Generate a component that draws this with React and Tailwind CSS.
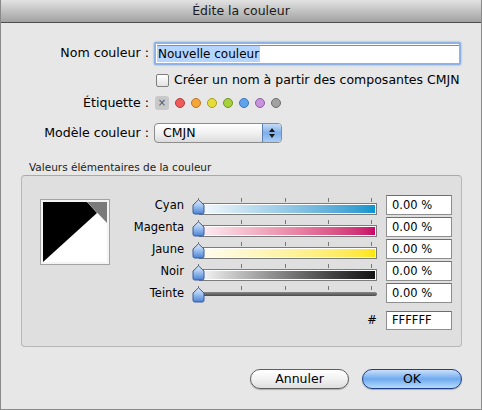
import React from "react";

const FONT = { fontFamily: '"Lucida Grande", "DejaVu Sans", sans-serif' };

function Knob() {
  return (
    <svg width="13" height="16" viewBox="0 0 13 16" className="block">
      <defs>
        <linearGradient id="kg" x1="0" y1="0" x2="0" y2="1">
          <stop offset="0" stopColor="#e3eefc" />
          <stop offset="0.45" stopColor="#9fc2ef" />
          <stop offset="1" stopColor="#4a82d4" />
        </linearGradient>
      </defs>
      <path
        d="M6.5 0.8 L12 6 L12 13.3 Q12 15 10.3 15 L2.7 15 Q1 15 1 13.3 L1 6 Z"
        fill="url(#kg)"
        stroke="#3b5b99"
        strokeWidth="1"
      />
    </svg>
  );
}

function Ticks() {
  return (
    <div className="absolute left-0 top-[3px] w-full h-[5px]">
      {[7, 50, 94, 137, 180].map((x) => (
        <div key={x} className="absolute top-0 w-px h-[4px] bg-[#777]" style={{ left: x }} />
      ))}
    </div>
  );
}

function Slider({ label, grad, line }) {
  return (
    <div className="flex h-[22px] items-start">
      <div className="w-[70px] text-right text-[11.5px] leading-[20px] text-black pr-[1px]">{label}</div>
      <div className="relative w-[190px] h-[22px] ml-[6px]">
        <Ticks />
        {line ? (
          <div className="absolute left-[8px] top-[9px] w-[178px] h-[4px] rounded-full bg-gradient-to-b from-[#8a8a8a] to-[#4a4a4a]" />
        ) : (
          <div className="absolute left-[8px] top-[8px] w-[178px] h-[12px] border border-[#7b7b7b] bg-white p-px">
            <div className={`w-full h-full ${grad}`} />
          </div>
        )}
        <div className="absolute left-[1px] top-[4px]">
          <Knob />
        </div>
      </div>
      <div className="ml-[5px] w-[66px] h-[20px] bg-white border border-[#8e8e8e] border-t-[#6e6e6e] text-[11.5px] leading-[18px] pl-[5px] text-black">
        0.00 %
      </div>
    </div>
  );
}

function Swatch() {
  return (
    <div className="w-[70px] h-[66px] border border-[#a3a3a3] bg-[#f4f4f4] p-[2px]">
      <svg width="64" height="60" viewBox="0 0 64 60" className="block">
        <rect width="64" height="60" fill="#fff" />
        <polygon points="0,0 44,0 54,11 0,60" fill="#000" />
        <polygon points="44,0 64,0 64,21" fill="#7a7a7a" />
      </svg>
    </div>
  );
}

const dots = [
  ["#ef5b5b", "#b53a3a"],
  ["#f5a53a", "#b9771f"],
  ["#e6dd3c", "#a99f1c"],
  ["#a5d13b", "#72961f"],
  ["#5ea3ee", "#3a74b9"],
  ["#c693dc", "#8f5ea6"],
  ["#a2a2a2", "#6b6b6b"],
];

export default function App() {
  return (
    <div
      className="w-[482px] h-[410px] bg-[#e7e7e7] border-x border-b border-[#8a8a8a] flex flex-col text-black overflow-hidden"
      style={FONT}
    >
      {/* title bar */}
      <div className="h-[23px] shrink-0 bg-gradient-to-b from-[#e2e2e2] via-[#c2c2c2] to-[#a2a2a2] border-b border-[#4d4d4d] flex items-center justify-center text-[12.5px] text-[#1a1a1a] pt-px">
        Édite la couleur
      </div>

      {/* name row */}
      <div className="mt-[19px] flex items-center h-[23px]">
        <div className="w-[148px] text-right text-[12.6px]">Nom couleur :</div>
        <div className="ml-[5px] w-[307px] h-[23px] rounded-[2px] border-2 border-[#8fb2e4] shadow-[0_0_2px_#6c96d6] flex items-center bg-white">
          <div className="ml-[1px] h-[17px] border-t border-[#8a8a8a] flex-1 flex items-center">
            <span className="bg-[#b5d5ff] text-[12px] leading-[16px] px-[1px]">Nouvelle couleur</span>
          </div>
        </div>
      </div>

      {/* checkbox row */}
      <div className="mt-[6px] h-[18px] flex items-center pl-[155px]">
        <div className="w-[13px] h-[13px] rounded-[2px] border border-[#7e7e7e] bg-gradient-to-b from-white to-[#e3e3e3]" />
        <span className="ml-[5px] text-[12.5px]">Créer un nom à partir des composantes CMJN</span>
      </div>

      {/* label row */}
      <div className="mt-[5px] h-[18px] flex items-center">
        <div className="w-[148px] text-right text-[12.6px]">Étiquette :</div>
        <div className="ml-[6px] w-[14px] h-[14px] rounded-[3px] bg-[#c9c9c9] flex items-center justify-center text-[10px] leading-none text-[#555]">
          ×
        </div>
        <div className="flex ml-[6px] gap-[6px]">
          {dots.map(([c, b]) => (
            <div
              key={c}
              className="w-[10px] h-[10px] rounded-full border"
              style={{ background: c, borderColor: b }}
            />
          ))}
        </div>
      </div>

      {/* model row */}
      <div className="mt-[11px] h-[20px] flex items-center">
        <div className="w-[148px] text-right text-[12.6px]">Modèle couleur :</div>
        <div className="ml-[5px] w-[128px] h-[20px] rounded-[4px] border border-[#8c8c8c] bg-gradient-to-b from-white via-[#f1f1f1] to-[#dcdcdc] flex overflow-hidden">
          <div className="flex-1 text-[12.5px] leading-[18px] pl-[8px]">CMJN</div>
          <div className="w-[19px] h-full border-l border-[#5c7fb5] bg-gradient-to-b from-[#c6dcf7] via-[#7eaeea] to-[#a9cdf5] flex flex-col items-center justify-center gap-[2px]">
            <div className="w-0 h-0 border-x-[3px] border-x-transparent border-b-[4px] border-b-[#1b1b1b]" />
            <div className="w-0 h-0 border-x-[3px] border-x-transparent border-t-[4px] border-t-[#1b1b1b]" />
          </div>
        </div>
      </div>

      {/* group label */}
      <div className="mt-[17px] h-[14px] pl-[28px] text-[10.5px] leading-[14px] text-[#222]">
        Valeurs élémentaires de la couleur
      </div>

      {/* group box */}
      <div className="mt-[1px] ml-[20px] w-[441px] h-[172px] rounded-[4px] border border-[#b7b7b7] border-t-[#a9a9a9] bg-[#dfdfdf] flex">
        <div className="pl-[18px] pt-[23px]">
          <Swatch />
        </div>
        <div className="ml-[5px] pt-[19px] flex flex-col">
          <Slider label="Cyan" grad="bg-gradient-to-r from-[#f3f9fc] to-[#0096cd]" />
          <Slider label="Magenta" grad="bg-gradient-to-r from-[#fbedf2] to-[#c9006a]" />
          <Slider label="Jaune" grad="bg-gradient-to-r from-[#fffcf0] to-[#ffe600]" />
          <Slider label="Noir" grad="bg-gradient-to-r from-[#f6f6f6] to-[#141414]" />
          <Slider label="Teinte" line />
          <div className="mt-[6px] flex items-center justify-end h-[19px]">
            <span className="text-[11.5px] mr-[9px]">#</span>
            <div className="w-[66px] h-[19px] bg-white border border-[#8e8e8e] border-t-[#6e6e6e] text-[11.5px] leading-[17px] pl-[5px]">
              FFFFFF
            </div>
          </div>
        </div>
      </div>

      {/* buttons */}
      <div className="mt-[22px] flex pl-[249px] gap-[13px]">
        <div className="w-[99px] h-[20px] rounded-full border border-[#5f5f5f] bg-gradient-to-b from-white via-[#f2f2f2] to-[#dedede] text-[12.5px] leading-[18px] text-center shadow-[0_1px_1px_rgba(0,0,0,0.25)]">
          Annuler
        </div>
        <div className="w-[100px] h-[20px] rounded-full border border-[#1f3f86] bg-gradient-to-b from-[#c9e0fb] via-[#6fa9ee] to-[#b6dcfd] text-[12.5px] leading-[18px] text-center shadow-[0_1px_1px_rgba(0,0,0,0.25)]">
          OK
        </div>
      </div>
    </div>
  );
}
